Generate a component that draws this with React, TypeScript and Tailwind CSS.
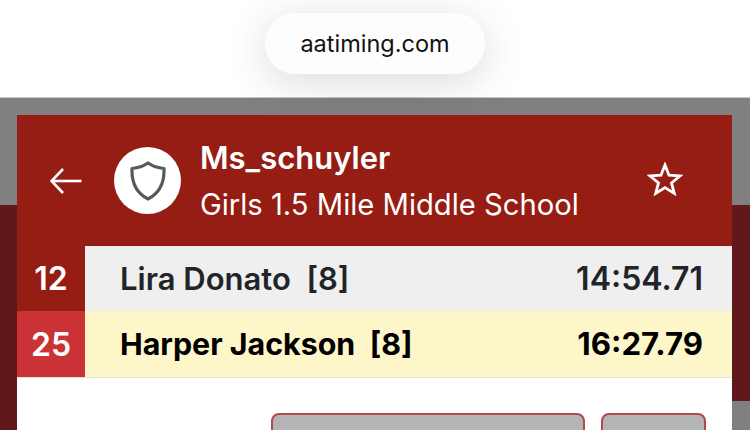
const rows = [
  { place: "12", name: "Lira Donato", grade: "[8]", time: "14:54.71", h: "h-[65px]", placeBg: "bg-[#961d13]", rowBg: "bg-[#efeff0]", text: "text-[#212529] font-semibold text-[31px]", timeSize: "text-[32px]" },
  { place: "25", name: "Harper Jackson", grade: "[8]", time: "16:27.79", h: "h-[66px]", placeBg: "bg-[#cb3235]", rowBg: "bg-[#fdf6c9]", text: "text-black font-bold text-[30.4px]", timeSize: "text-[31.2px]" },
];

const App = () => {
  return (
    <div className="relative h-[430px] w-[750px] overflow-hidden bg-white font-['Inter',sans-serif]">
      {/* page behind the modal */}
      <div className="h-[98px] border-b border-[#c8c8c8]" />
      <div className="h-[107px] bg-[#808080]" />
      <div className="h-[196px] bg-[#62171a]" />
      <div className="h-[29px] bg-[#808080]" />
      <div className="absolute left-0 top-[205px] h-[225px] w-[17px] bg-[#62171a]" />

      {/* url pill */}
      <div className="absolute left-[265px] top-[13px] flex h-[61px] w-[220px] items-center justify-center rounded-[30px] bg-[#fdfdfd] text-[23.5px] text-[#111] shadow-[0_8px_44px_rgba(0,0,0,0.15)]">
        aatiming.com
      </div>

      {/* modal */}
      <div className="absolute left-[17px] top-[115px] h-[315px] w-[715px] bg-white">
        <div className="flex h-[131px] items-center bg-[#961d13] pl-[33px] pr-[49px] text-white">
          <svg width="32" height="26" viewBox="0 0 32 26" fill="none" stroke="currentColor" strokeWidth="2.6" className="shrink-0">
            <path d="M31.5 13H2" />
            <path d="M13 1L1.5 13L13 25" />
          </svg>
          <div className="ml-[32px] flex h-[67px] w-[67px] shrink-0 items-center justify-center rounded-full bg-white">
            <svg width="36" height="40" viewBox="0 0 36 40" fill="none" stroke="#555a5f" strokeWidth="3.2" strokeLinejoin="round">
              <path d="M18 2C23 5.5 28 7 34 7.5C34.5 21 30 32 18 38C6 32 1.5 21 2 7.5C8 7 13 5.5 18 2Z" />
            </svg>
          </div>
          <div className="ml-[19px] flex flex-1 flex-col pt-[6px]">
            <span className="-mt-[2px] text-[31px] font-semibold leading-[40px]">Ms_schuyler</span>
            <span className="mt-[4px] text-[29.2px] leading-[46px]">Girls 1.5 Mile Middle School</span>
          </div>
          <svg width="36" height="34" viewBox="0 0 36 34" fill="none" stroke="currentColor" strokeWidth="2.8" strokeLinejoin="miter" className="-mt-[4px] shrink-0">
            <path d="M18 3L22 13.2L33 13.9L24.5 20.9L27.3 31.4L18 25.6L8.7 31.4L11.5 20.9L3 13.9L14 13.2Z" />
          </svg>
        </div>

        {rows.map((r) => (
          <div key={r.place} className={`flex ${r.h}`}>
            <div className={`flex w-[68px] items-center justify-center pt-[1px] text-[32px] font-semibold text-white ${r.placeBg}`}>
              {r.place}
            </div>
            <div className={`flex flex-1 items-center justify-between pl-[35px] pr-[29px] pt-[1px] ${r.rowBg} ${r.text}`}>
              <span className="whitespace-pre">{r.name}  {r.grade}</span>
              <span className={r.timeSize}>{r.time}</span>
            </div>
          </div>
        ))}
        <div className="h-px bg-[#e3e3e3]" />

        <div className="mt-[35px] flex justify-end gap-[16px] pr-[26px]">
          <div className="h-[40px] w-[314px] rounded-t-[8px] border-2 border-[#b0484c] bg-[#b5b5b5]" />
          <div className="h-[40px] w-[105px] rounded-t-[8px] border-2 border-[#b0484c] bg-[#b5b5b5]" />
        </div>
      </div>
    </div>
  );
};

export default App;
